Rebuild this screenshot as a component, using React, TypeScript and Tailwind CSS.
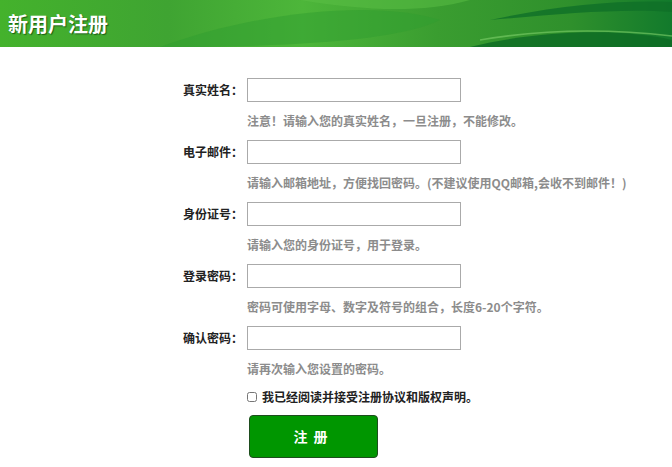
import React from "react";

const fields = [
  { label: "真实姓名：", hint: "注意！请输入您的真实姓名，一旦注册，不能修改。" },
  { label: "电子邮件：", hint: "请输入邮箱地址，方便找回密码。(不建议使用QQ邮箱,会收不到邮件！)" },
  { label: "身份证号：", hint: "请输入您的身份证号，用于登录。" },
  { label: "登录密码：", hint: "密码可使用字母、数字及符号的组合，长度6-20个字符。" },
  { label: "确认密码：", hint: "请再次输入您设置的密码。" },
];

function HeaderWaves() {
  return (
    <svg className="absolute inset-0 h-full w-full" viewBox="0 0 672 47" preserveAspectRatio="none">
      <path d="M160 47 C 260 10, 380 0, 440 20 C 400 40, 300 47, 160 47 Z" fill="#2f9e2f" opacity="0.5" />
      <path d="M300 0 C 360 10, 420 14, 470 0 Z" fill="#5cbf45" opacity="0.5" />
      <path d="M490 20 C 560 5, 620 0, 672 2 L 672 12 C 620 8, 560 14, 490 20 Z" fill="#0f6f28" opacity="0.8" />
      <path d="M470 47 C 540 30, 620 28, 672 40 L 672 47 Z" fill="#0c6a24" opacity="0.8" />
      <path d="M480 40 C 550 28, 620 30, 672 36" stroke="#7fd06a" strokeWidth="1.5" fill="none" opacity="0.6" />
    </svg>
  );
}

export default function App() {
  return (
    <div className="min-h-[467px] w-[672px] bg-white font-['Noto_Sans_CJK_SC','Noto_Sans',sans-serif]">
      <div className="relative h-[47px] overflow-hidden bg-[linear-gradient(90deg,#44b22c_0%,#3fa432_25%,#4db63a_45%,#3a9d30_65%,#2f902c_85%,#127a2c_100%)]">
        <HeaderWaves />
        <h1 className="relative pl-2 text-[20px] font-bold leading-[47px] text-white [text-shadow:1px_1px_1px_rgba(0,40,0,0.6)]">
          新用户注册
        </h1>
      </div>

      <div className="pt-[31px]">
        {fields.map((f) => (
          <div key={f.label} className="mb-[9px]">
            <div className="flex items-center">
              <label className="w-[243px] text-right text-[12px] font-bold text-[#222]">{f.label}</label>
              <input
                type={f.label.includes("密码") ? "password" : "text"}
                className="ml-1 h-[24px] w-[214px] border border-[#aaa] bg-white px-1 text-[12px] outline-none"
              />
            </div>
            <div className="mt-[9px] h-[20px] pl-[247px] text-[12px] font-bold leading-[20px] text-[#8c8c8c]">
              {f.hint}
            </div>
          </div>
        ))}

        <div className="mt-[1px] flex items-center pl-[247px]">
          <input type="checkbox" className="h-[10px] w-[10px] accent-gray-400" />
          <span className="ml-[5px] text-[12px] font-bold text-[#222]">我已经阅读并接受注册协议和版权声明。</span>
        </div>

        <div className="mt-[9px] pl-[249px]">
          <button className="h-[43px] w-[129px] rounded-[4px] border border-[#1e4d1e] bg-[#009600] text-[14px] font-bold tracking-[6px] text-white">
            注册
          </button>
        </div>
      </div>
    </div>
  );
}
